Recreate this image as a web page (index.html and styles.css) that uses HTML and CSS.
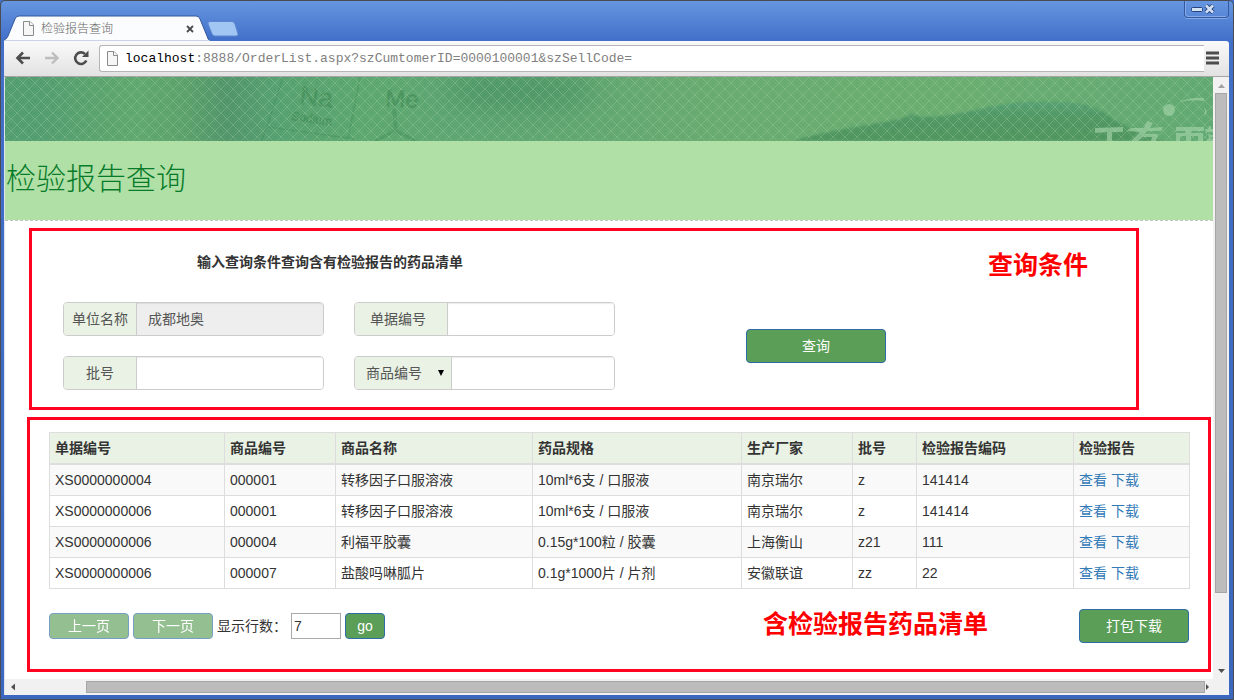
FILE: index.html
```html
<!DOCTYPE html>
<html lang="zh-CN">
<head>
<meta charset="utf-8">
<title>检验报告查询</title>
<link rel="stylesheet" href="styles.css">
</head>
<body>
<div class="window">
  <header class="titlebar">
    <div class="tab">
      <svg class="tab-shape" viewBox="0 0 206 26" aria-hidden="true">
        <path d="M0 26V25Q3 24 4 21L11 4Q12 1 15 1H192Q195 1 196 4L203 21Q204 25 206 26Z" fill="#fbfcfd" stroke="#35589c" stroke-width="1"/>
        <path d="M0 26V25.500H206V26Z" fill="#fbfcfd"/>
      </svg>
      <svg class="page-icon" viewBox="0 0 13 15" aria-hidden="true"><path d="M1.500 .5H8L11.500 4V14.500H1.500Z" fill="#f6f6f6" stroke="#8a8a8a"/><path d="M7.500 .5V4.500H11.500" fill="#fff" stroke="#8a8a8a"/></svg>
      <span class="tab-title">检验报告查询</span>
      <button class="tab-close" aria-label="关闭标签页"><svg viewBox="0 0 8 8" aria-hidden="true"><path d="M1 1L7 7M7 1L1 7" stroke="#4a4a4a" stroke-width="1.800"/></svg></button>
    </div>
    <button class="new-tab" aria-label="新标签页"><svg viewBox="0 0 32 16" aria-hidden="true"><path d="M3 .5H25Q27 .5 28 3L31 13Q31.500 15 29 15H8Q6 15 5 13L1 3Q.5 .5 3 .5Z" fill="#a2c6f3" stroke="#5c87cf"/></svg></button>
    <div class="window-buttons">
      <button aria-label="最小化"><svg width="12" height="5" viewBox="0 0 12 5" aria-hidden="true"><rect x=".5" y=".5" width="11" height="4" rx="1" fill="#d3e1f5" stroke="#28447e"/></svg></button>
      <button aria-label="关闭"><svg width="11" height="10" viewBox="0 0 11 10" aria-hidden="true"><path d="M2 1.500L9 8.500M9 1.500L2 8.500" stroke="#28447e" stroke-width="4.500"/><path d="M2 1.500L9 8.500M9 1.500L2 8.500" stroke="#d3e1f5" stroke-width="2.500"/></svg></button>
    </div>
  </header>

  <nav class="toolbar">
    <button aria-label="后退"><svg width="16" height="14" viewBox="0 0 16 14" fill="none" aria-hidden="true"><path d="M15 7H2.500M8 1.500L2.500 7L8 12.500" stroke="#4d4d4d" stroke-width="2.600"/></svg></button>
    <button aria-label="前进"><svg width="16" height="14" viewBox="0 0 16 14" fill="none" aria-hidden="true"><path d="M1 7H13.500M8 1.500L13.500 7L8 12.500" stroke="#bdbdbd" stroke-width="2.400"/></svg></button>
    <button aria-label="刷新"><svg width="16" height="16" viewBox="0 0 16 16" fill="none" aria-hidden="true"><path d="M12 4A5.800 5.800 0 1 0 13.300 10.500" stroke="#4d4d4d" stroke-width="2.600"/><path d="M15.500 .5V7H9Z" fill="#4d4d4d"/></svg></button>
    <div class="address">
      <svg class="page-icon" viewBox="0 0 13 15" aria-hidden="true"><path d="M1.500 .5H8L11.500 4V14.500H1.500Z" fill="#f6f6f6" stroke="#8a8a8a"/><path d="M7.500 .5V4.500H11.500" fill="#fff" stroke="#8a8a8a"/></svg>
      <span class="url"><b>localhost</b>:8888/OrderList.aspx?szCumtomerID=0000100001&amp;szSellCode=</span>
    </div>
    <button class="menu" aria-label="菜单"><svg width="13" height="14" viewBox="0 0 13 14" aria-hidden="true"><path d="M0 2H13M0 7H13M0 12H13" stroke="#4d4d4d" stroke-width="3"/></svg></button>
  </nav>

  <div class="viewport">
    <main class="page">
      <svg class="banner" viewBox="0 0 1208 64" preserveAspectRatio="xMidYMid slice" aria-hidden="true">
        <defs>
          <linearGradient id="base" gradientUnits="userSpaceOnUse" x1="0" y1="0" x2="1208" y2="0">
            <stop offset="0" stop-color="#529d70"/><stop offset=".03" stop-color="#529d70"/><stop offset=".11" stop-color="#5ea76d"/><stop offset=".15" stop-color="#5aa06b"/>
            <stop offset=".185" stop-color="#50946a"/><stop offset=".22" stop-color="#549f70"/><stop offset=".3" stop-color="#5ba76f"/>
            <stop offset=".37" stop-color="#5da572"/><stop offset=".5" stop-color="#62a771"/><stop offset=".6" stop-color="#68ab70"/>
            <stop offset=".8" stop-color="#68ac70"/><stop offset="1" stop-color="#60a872"/>
          </linearGradient>
          <linearGradient id="hill" x2="0" y2="1"><stop offset="0" stop-color="#55a072"/><stop offset=".4" stop-color="#4f9764"/><stop offset="1" stop-color="#4f9560"/></linearGradient>
          <pattern id="mesh" width="12" height="12" patternUnits="userSpaceOnUse">
            <path d="M-1 -1L13 13M13 -1L-1 13" stroke="#b5dcae" stroke-opacity=".3"/>
            <path d="M-1 2L10 13M2 -1L13 10M10 -1L-1 10M13 2L2 13" stroke="#b5dcae" stroke-opacity=".07"/>
          </pattern>
          <filter id="soft" x="-50%" y="-100%" width="200%" height="300%"><feGaussianBlur stdDeviation="14"/></filter>
          <filter id="edge"><feGaussianBlur stdDeviation="1"/></filter>
        </defs>
        <rect width="1208" height="64" fill="url(#base)"/>
        <ellipse cx="515" cy="14" rx="76" ry="22" fill="#438c60" opacity=".6" filter="url(#soft)"/>
        <path d="M788 64C820 54 860 49 890 43L900 40L907 37L916 40C960 40 975 28 1020 25C1060 24 1085 25 1100 36C1118 49 1135 57 1160 64Z" fill="url(#hill)" filter="url(#edge)"/>
        <g fill="none" stroke="#3f8a58" stroke-opacity=".4" stroke-width="1.500">
          <path d="M278 0L262 50L350 62M355 0L343 62M262 50L256 64"/>
          <path stroke-width="3" d="M370 64L390 54L412 64"/><path d="M389 31L391 54" stroke-width="4"/>
        </g>
        <g fill="#38834f" fill-opacity=".45" font-family="Liberation Sans, sans-serif" stroke="#38834f" stroke-opacity=".25">
          <text x="294" y="27" font-size="26" transform="rotate(6 294 27)">Na</text>
          <text x="286" y="43" font-size="12" transform="rotate(8 286 43)">Sodium</text>
          <text x="380" y="29" font-size="24" transform="rotate(3 380 29)">Me</text>
        </g>
        <rect width="1208" height="64" fill="url(#mesh)"/>
        <g fill="#a3d2a7" fill-opacity=".65">
          <circle cx="1164" cy="33" r="6"/>
          <path d="M1174 25Q1187 20 1199 21V24Q1186 22 1174 25ZM1199 30Q1204 34 1199 40Q1201 35 1199 30Z"/>
          <path d="M1090 51L1118 50V55H1107V64H1102V55L1090 56Z"/>
          <path d="M1142 44L1148 46L1145 51L1158 50L1156 54H1142L1140 57H1153L1151 64H1146L1147 60H1138L1133 64H1126L1135 55L1122 54L1126 51H1139Z"/>
          <path fill-rule="evenodd" d="M1171 50H1199V54H1187L1186 56H1198V64H1171V56H1180L1181 54H1171ZM1175 59V64H1181V59ZM1186 59V64H1193V59Z"/>
          <path d="M1200 52H1203L1204 49H1206V52H1208V55H1202L1201 58ZM1203 57L1208 58V60L1205 61L1208 62V64H1201L1204 61Z"/>
        </g>
      </svg>
      <h1 class="page-title">检验报告查询</h1>

      <section class="panel search">
        <div class="search-head">
          <h2>输入查询条件查询含有检验报告的药品清单</h2>
          <strong class="note">查询条件</strong>
        </div>
        <form class="search-form">
          <div class="fields">
            <div class="field"><label for="unit">单位名称</label><input id="unit" type="text" value="成都地奥" readonly></div>
            <div class="field wide"><label for="order">单据编号</label><input id="order" type="text"></div>
            <div class="field"><label for="batch">批号</label><input id="batch" type="text"></div>
            <div class="field wide">
              <span class="picker"><select aria-label="查询字段"><option>商品编号</option><option>商品名称</option></select></span>
              <input type="text" aria-label="商品编号">
            </div>
          </div>
          <button type="button" class="btn query">查询</button>
        </form>
      </section>

      <section class="panel results">
        <table>
          <colgroup><col class="c-order"><col class="c-code"><col class="c-name"><col class="c-spec"><col class="c-maker"><col class="c-batch"><col class="c-report"><col class="c-action"></colgroup>
          <thead>
            <tr><th>单据编号</th><th>商品编号</th><th>商品名称</th><th>药品规格</th><th>生产厂家</th><th>批号</th><th>检验报告编码</th><th>检验报告</th></tr>
          </thead>
          <tbody>
            <tr><td>XS0000000004</td><td>000001</td><td>转移因子口服溶液</td><td>10ml*6支 / 口服液</td><td>南京瑞尔</td><td>z</td><td>141414</td><td><a href="#">查看</a> <a href="#">下载</a></td></tr>
            <tr><td>XS0000000006</td><td>000001</td><td>转移因子口服溶液</td><td>10ml*6支 / 口服液</td><td>南京瑞尔</td><td>z</td><td>141414</td><td><a href="#">查看</a> <a href="#">下载</a></td></tr>
            <tr><td>XS0000000006</td><td>000004</td><td>利福平胶囊</td><td>0.15g*100粒 / 胶囊</td><td>上海衡山</td><td>z21</td><td>111</td><td><a href="#">查看</a> <a href="#">下载</a></td></tr>
            <tr><td>XS0000000006</td><td>000007</td><td>盐酸吗啉胍片</td><td>0.1g*1000片 / 片剂</td><td>安徽联谊</td><td>zz</td><td>22</td><td><a href="#">查看</a> <a href="#">下载</a></td></tr>
          </tbody>
        </table>
        <div class="pager">
          <button type="button" class="btn page-btn" disabled>上一页</button>
          <button type="button" class="btn page-btn" disabled>下一页</button>
          <label for="rows">显示行数：</label>
          <input id="rows" class="rows" type="text" value="7">
          <button type="button" class="btn go">go</button>
          <strong class="note">含检验报告药品清单</strong>
          <button type="button" class="btn download">打包下载</button>
        </div>
      </section>
    </main>

    <div class="scroll-y" aria-hidden="true">
      <svg class="arrow" viewBox="0 0 16 16"><path d="M5 11L8.500 7L12 11Z" fill="#a0a0a0"/></svg>
      <div class="thumb"></div>
      <div class="rest"></div>
      <svg class="arrow" viewBox="0 0 16 16"><path d="M5 6L8.500 10L12 6Z" fill="#505050"/></svg>
    </div>
    <div class="scroll-x" aria-hidden="true">
      <svg class="arrow" viewBox="0 0 16 16"><path d="M10 4.500L6 8L10 11.500Z" fill="#505050"/></svg>
      <div class="rest"></div>
      <div class="thumb"></div>
      <svg class="arrow small" viewBox="0 0 8 16"><path d="M1 5L4 8L1 11Z" fill="#505050"/></svg>
    </div>
    <div class="corner"></div>
  </div>
</div>
</body>
</html>
```

FILE: styles.css
```css
* { box-sizing: border-box; }

body {
  margin: 0;
  background: #3f6fc8;
  color: #333;
  font: 14px/20px "Liberation Sans", "Noto Sans CJK SC", sans-serif;
}

button { border: 0; padding: 0; background: none; font: inherit; color: inherit; }
svg { display: block; }

.window {
  display: flex;
  flex-direction: column;
  min-height: 100vh;
  border: 1px solid #4a4c52;
  border-radius: 5px 5px 0 0;
  padding: 0 4px 4px 3px;
  background: linear-gradient(#6696e0, #416fc9 40px, #3b68be);
}

/* browser chrome */
.titlebar { display: flex; align-items: flex-end; height: 40px; }
.tab {
  position: relative;
  display: flex;
  align-items: center;
  width: 206px;
  height: 26px;
  padding: 1px 16px 0 18px;
}
.tab-shape { position: absolute; left: 0; top: 0; width: 206px; height: 26px; }
.page-icon { flex: none; width: 13px; height: 15px; position: relative; }
.tab-title { position: relative; flex: 1; margin-left: 6px; color: #666; font-size: 12px; font-weight: 300; }
.tab-close { position: relative; width: 8px; height: 8px; }
.new-tab { width: 32px; height: 16px; margin: 0 0 4px -3px; }
.window-buttons {
  display: flex;
  align-items: center;
  gap: 1px;
  align-self: flex-start;
  width: 45px;
  height: 17px;
  margin: 0 0 0 auto;
  padding-left: 6px;
  border: 1px solid #3558a0;
  border-top: 0;
  border-radius: 0 0 4px 4px;
  box-shadow: inset 1px -1px #83a9e6, 0 1px #83a9e6;
}

.toolbar {
  display: flex;
  align-items: center;
  gap: 13px;
  height: 36px;
  padding: 0 10px 1px 11px;
  border-bottom: 1px solid #a5a5a5;
  border-radius: 0 3px 0 0;
  background: linear-gradient(#fafafa, #e2e2e2);
}
.address {
  flex: 1;
  display: flex;
  align-items: center;
  gap: 6px;
  height: 27px;
  margin: 0 -11px 0 -3px;
  padding-left: 6px;
  border: 1px solid #b5b5b5;
  border-right: 0;
  border-radius: 3px 0 0 3px;
  background: #fff;
}
.url { padding-top: 2px; color: #808080; font: 13px/20px "Liberation Mono", monospace; }
.url b { color: #000; font-weight: 400; }

/* scrolled page */
.viewport {
  flex: 1;
  display: grid;
  grid-template-columns: 1fr 16px;
  grid-template-rows: 1fr 16px;
  border-left: 1px solid #dfe3ea;
  background: #f1f1f1;
}
.page { min-width: 0; padding-bottom: 7px; background: #fff; }
.banner { width: 100%; height: 64px; }
.page-title {
  margin: 0;
  padding: 18px 0 21px 1px;
  border-bottom: 1px dashed #c4c4c4;
  background: #b0e0a6;
  background-clip: padding-box;
  color: #087b2b;
  font-size: 30px;
  font-weight: 300;
  line-height: 40px;
}

.panel { border: 3px solid #ff0420; }
.note { color: #f00; font-size: 25px; font-weight: 700; line-height: 30px; }

.search { margin: 7px 74px 0 24px; padding: 19px 0 17px 31px; }
.search-head { display: flex; align-items: flex-start; padding: 0 48px 22px 134px; }
.search-head h2 { flex: 1; margin: 0; font-size: 14px; font-weight: 700; line-height: 24px; }
.search-form { display: flex; align-items: center; gap: 131px; }
.fields { display: grid; grid-template-columns: 261px 261px; gap: 20px 30px; }

.field { display: flex; height: 34px; border: 1px solid #ccc; border-radius: 4px; color: #555; }
.field label, .picker {
  flex: none;
  width: 73px;
  border-right: 1px solid #ccc;
  border-radius: 3px 0 0 3px;
  background: #e9f2e4;
  line-height: 32px;
  text-align: center;
}
.field.wide label { width: 93px; padding-right: 6px; }
.field .picker { position: relative; width: 97px; }
.picker::after {
  content: "";
  position: absolute;
  right: 7px;
  top: 13px;
  border: solid transparent;
  border-width: 6px 3px 0;
  border-top-color: #000;
}
.picker select {
  width: 100%;
  height: 32px;
  padding: 0 0 0 11px;
  border: 0;
  background: none;
  color: #555;
  font: inherit;
  appearance: none;
}
.field input {
  flex: 1;
  min-width: 0;
  padding: 0 11px;
  border: 0;
  border-radius: 0 3px 3px 0;
  background: #fff;
  box-shadow: inset 0 1px 1px rgba(0, 0, 0, .08);
  color: #555;
  font: inherit;
}
.field input:read-only { background: #eee; }

.btn { height: 34px; border: 1px solid #2e6da4; border-radius: 4px; background: #5a9e57; color: #fff; }
.query { width: 140px; }

.results { margin: 7px 2px 0 22px; padding: 12px 19px 26px; }
table { width: 100%; table-layout: fixed; border-collapse: collapse; }
th, td { height: 31px; padding: 5px; border: 1px solid #ddd; line-height: 20px; text-align: left; }
th { border-bottom-width: 2px; background: #e9f2e4; }
tbody tr:nth-child(odd) { background: #f9f9f9; }
a { color: #337ab7; text-decoration: none; }
.c-order { width: 175px; }
.c-code, .c-maker { width: 111px; }
.c-name { width: 197px; }
.c-spec { width: 209px; }
.c-batch { width: 64px; }
.c-report { width: 157px; }
.c-action { width: 116px; }

.pager { display: flex; align-items: center; gap: 4px; margin-top: 20px; }
.page-btn { width: 80px; height: 26px; }
.btn:disabled { opacity: .65; }
.rows { width: 50px; height: 26px; padding: 0 2px; border: 1px solid #a9a9a9; color: #333; font: inherit; }
.go { width: 40px; height: 26px; }
.pager .note { align-self: flex-start; margin-left: auto; }
.download { width: 110px; margin-left: 87px; }

/* scroll bars */
.arrow { flex: none; width: 16px; height: 16px; }
.arrow.small { width: 8px; }
.thumb { border: 1px solid #a6a6a6; background: #bcbcbc; }
.scroll-y { display: flex; flex-direction: column; }
.scroll-y .thumb { flex: 500; margin: 0 2px; }
.scroll-y .rest { flex: 70; }
.scroll-x { display: flex; }
.scroll-x .thumb { flex: 1117; margin: 2px 0; }
.scroll-x .rest { flex: 65; }
```
